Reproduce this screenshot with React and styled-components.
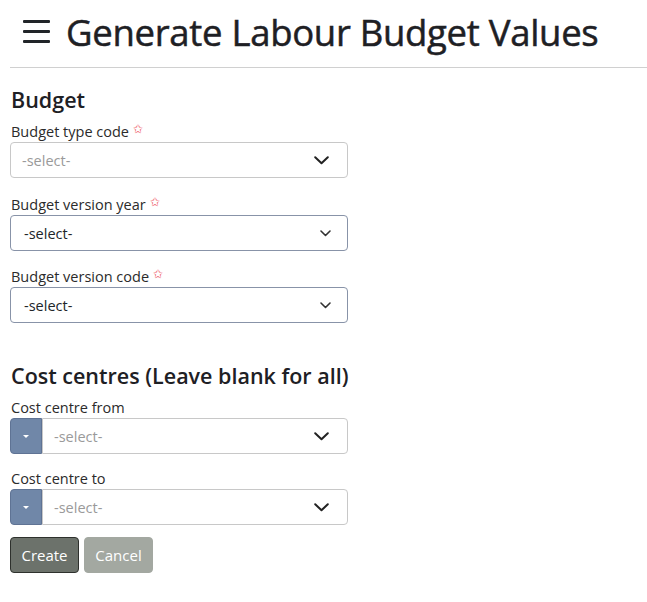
import styled, { createGlobalStyle } from 'styled-components'

const GlobalStyle = createGlobalStyle`
  * { box-sizing: border-box; }
  body {
    margin: 0;
    background: #fff;
    font-family: "Open Sans", "Noto Sans", sans-serif;
    color: #212529;
  }
`

const Page = styled.div`
  width: 647px;
  padding: 0 0 0 10px;
`

const Header = styled.header`
  display: flex;
  align-items: center;
  gap: 16px;
  padding: 7px 0 0 13px;
  height: 56px;
`

const Burger = styled.div`
  display: flex;
  flex-direction: column;
  gap: 7px;
  width: 27px;
  span {
    display: block;
    height: 3px;
    background: #212529;
    border-radius: 1px;
  }
`

const Title = styled.h1`
  margin: 0;
  font-size: 36.5px;
  font-weight: 400;
  letter-spacing: -0.3px;
  -webkit-text-stroke: 0.5px #1e2024;
  color: #1e2024;
  white-space: nowrap;
`

const Divider = styled.hr`
  margin: 11px 0 0;
  border: 0;
  border-top: 1px solid #d0d0d0;
`

const Section = styled.section`
  width: 338px;
  padding-top: ${p => p.$top}px;
`

const Heading = styled.h2`
  margin: 0 0 9px 1px;
  font-size: 21.5px;
  font-weight: 600;
  line-height: 26px;
  color: #1e2024;
  white-space: nowrap;
`

const Field = styled.div`
  margin-bottom: ${p => p.$gap}px;
`

const Label = styled.label`
  display: block;
  font-size: 14.5px;
  line-height: 19px;
  color: #2b2b2b;
  margin: 0 0 1px 1px;
`

const Star = styled.span`
  color: #ee5866;
  font-size: 12px;
  vertical-align: top;
  margin-left: 4px;
  position: relative;
  top: -3px;
`

const Row = styled.div`
  display: flex;
  height: 36px;
`

const Addon = styled.div`
  width: 32px;
  flex: none;
  display: flex;
  align-items: center;
  justify-content: center;
  background: #7087a8;
  border: 1px solid #5f7394;
  border-radius: 4px 0 0 4px;
  &::after {
    content: '';
    border-left: 3px solid transparent;
    border-right: 3px solid transparent;
    border-top: 3px solid #fff;
  }
`

const Select = styled.div`
  flex: 1;
  display: flex;
  align-items: center;
  justify-content: space-between;
  height: 36px;
  padding: 0 ${p => (p.$filled ? 16 : 18)}px 0 ${p => (p.$filled ? 13 : 11)}px;
  border: 1px solid ${p => (p.$filled ? '#8893a8' : '#c8c8c8')};
  border-radius: ${p => (p.$attached ? '0 4px 4px 0' : '4px')};
  font-size: 14.5px;
  color: ${p => (p.$filled ? '#212529' : '#9a9a9a')};
`

const Chevron = ({ small }) =>
  small ? (
    <svg width="11" height="7" viewBox="0 0 11 7" fill="none">
      <path d="M1 1 L5.5 5.5 L10 1" stroke="#333" strokeWidth="1.6" strokeLinecap="round" strokeLinejoin="round" />
    </svg>
  ) : (
    <svg width="15" height="9" viewBox="0 0 15 9" fill="none">
      <path d="M1.2 1.2 L7.5 7.3 L13.8 1.2" stroke="#222" strokeWidth="2" strokeLinecap="round" strokeLinejoin="round" />
    </svg>
  )

const Actions = styled.div`
  display: flex;
  gap: 5px;
  margin-top: 12px;
`

const Button = styled.button`
  height: 36px;
  width: 69px;
  font-family: inherit;
  font-size: 15px;
  color: #fff;
  border-radius: 4px;
  background: ${p => (p.$primary ? '#6c726b' : '#a3a8a1')};
  border: 1px solid ${p => (p.$primary ? '#2e312d' : '#a3a8a1')};
  padding: 0;
`

function SelectField({ label, required, filled, addon, gap }) {
  return (
    <Field $gap={gap}>
      <Label>
        {label}
        {required && <Star>✩</Star>}
      </Label>
      <Row>
        {addon && <Addon />}
        <Select $filled={filled} $attached={addon}>
          -select-
          <Chevron small={filled} />
        </Select>
      </Row>
    </Field>
  )
}

export default function App() {
  return (
    <>
      <GlobalStyle />
      <Page>
        <Header>
          <Burger>
            <span />
            <span />
            <span />
          </Burger>
          <Title>Generate Labour Budget Values</Title>
        </Header>
        <Divider />
        <Section $top={19}>
          <Heading>Budget</Heading>
          <SelectField label="Budget type code" required gap={17} />
          <SelectField label="Budget version year" required filled gap={16} />
          <SelectField label="Budget version code" required filled gap={0} />
        </Section>
        <Section $top={40}>
          <Heading>Cost centres (Leave blank for all)</Heading>
          <SelectField label="Cost centre from" addon gap={15} />
          <SelectField label="Cost centre to" addon gap={0} />
          <Actions>
            <Button $primary>Create</Button>
            <Button>Cancel</Button>
          </Actions>
        </Section>
      </Page>
    </>
  )
}
